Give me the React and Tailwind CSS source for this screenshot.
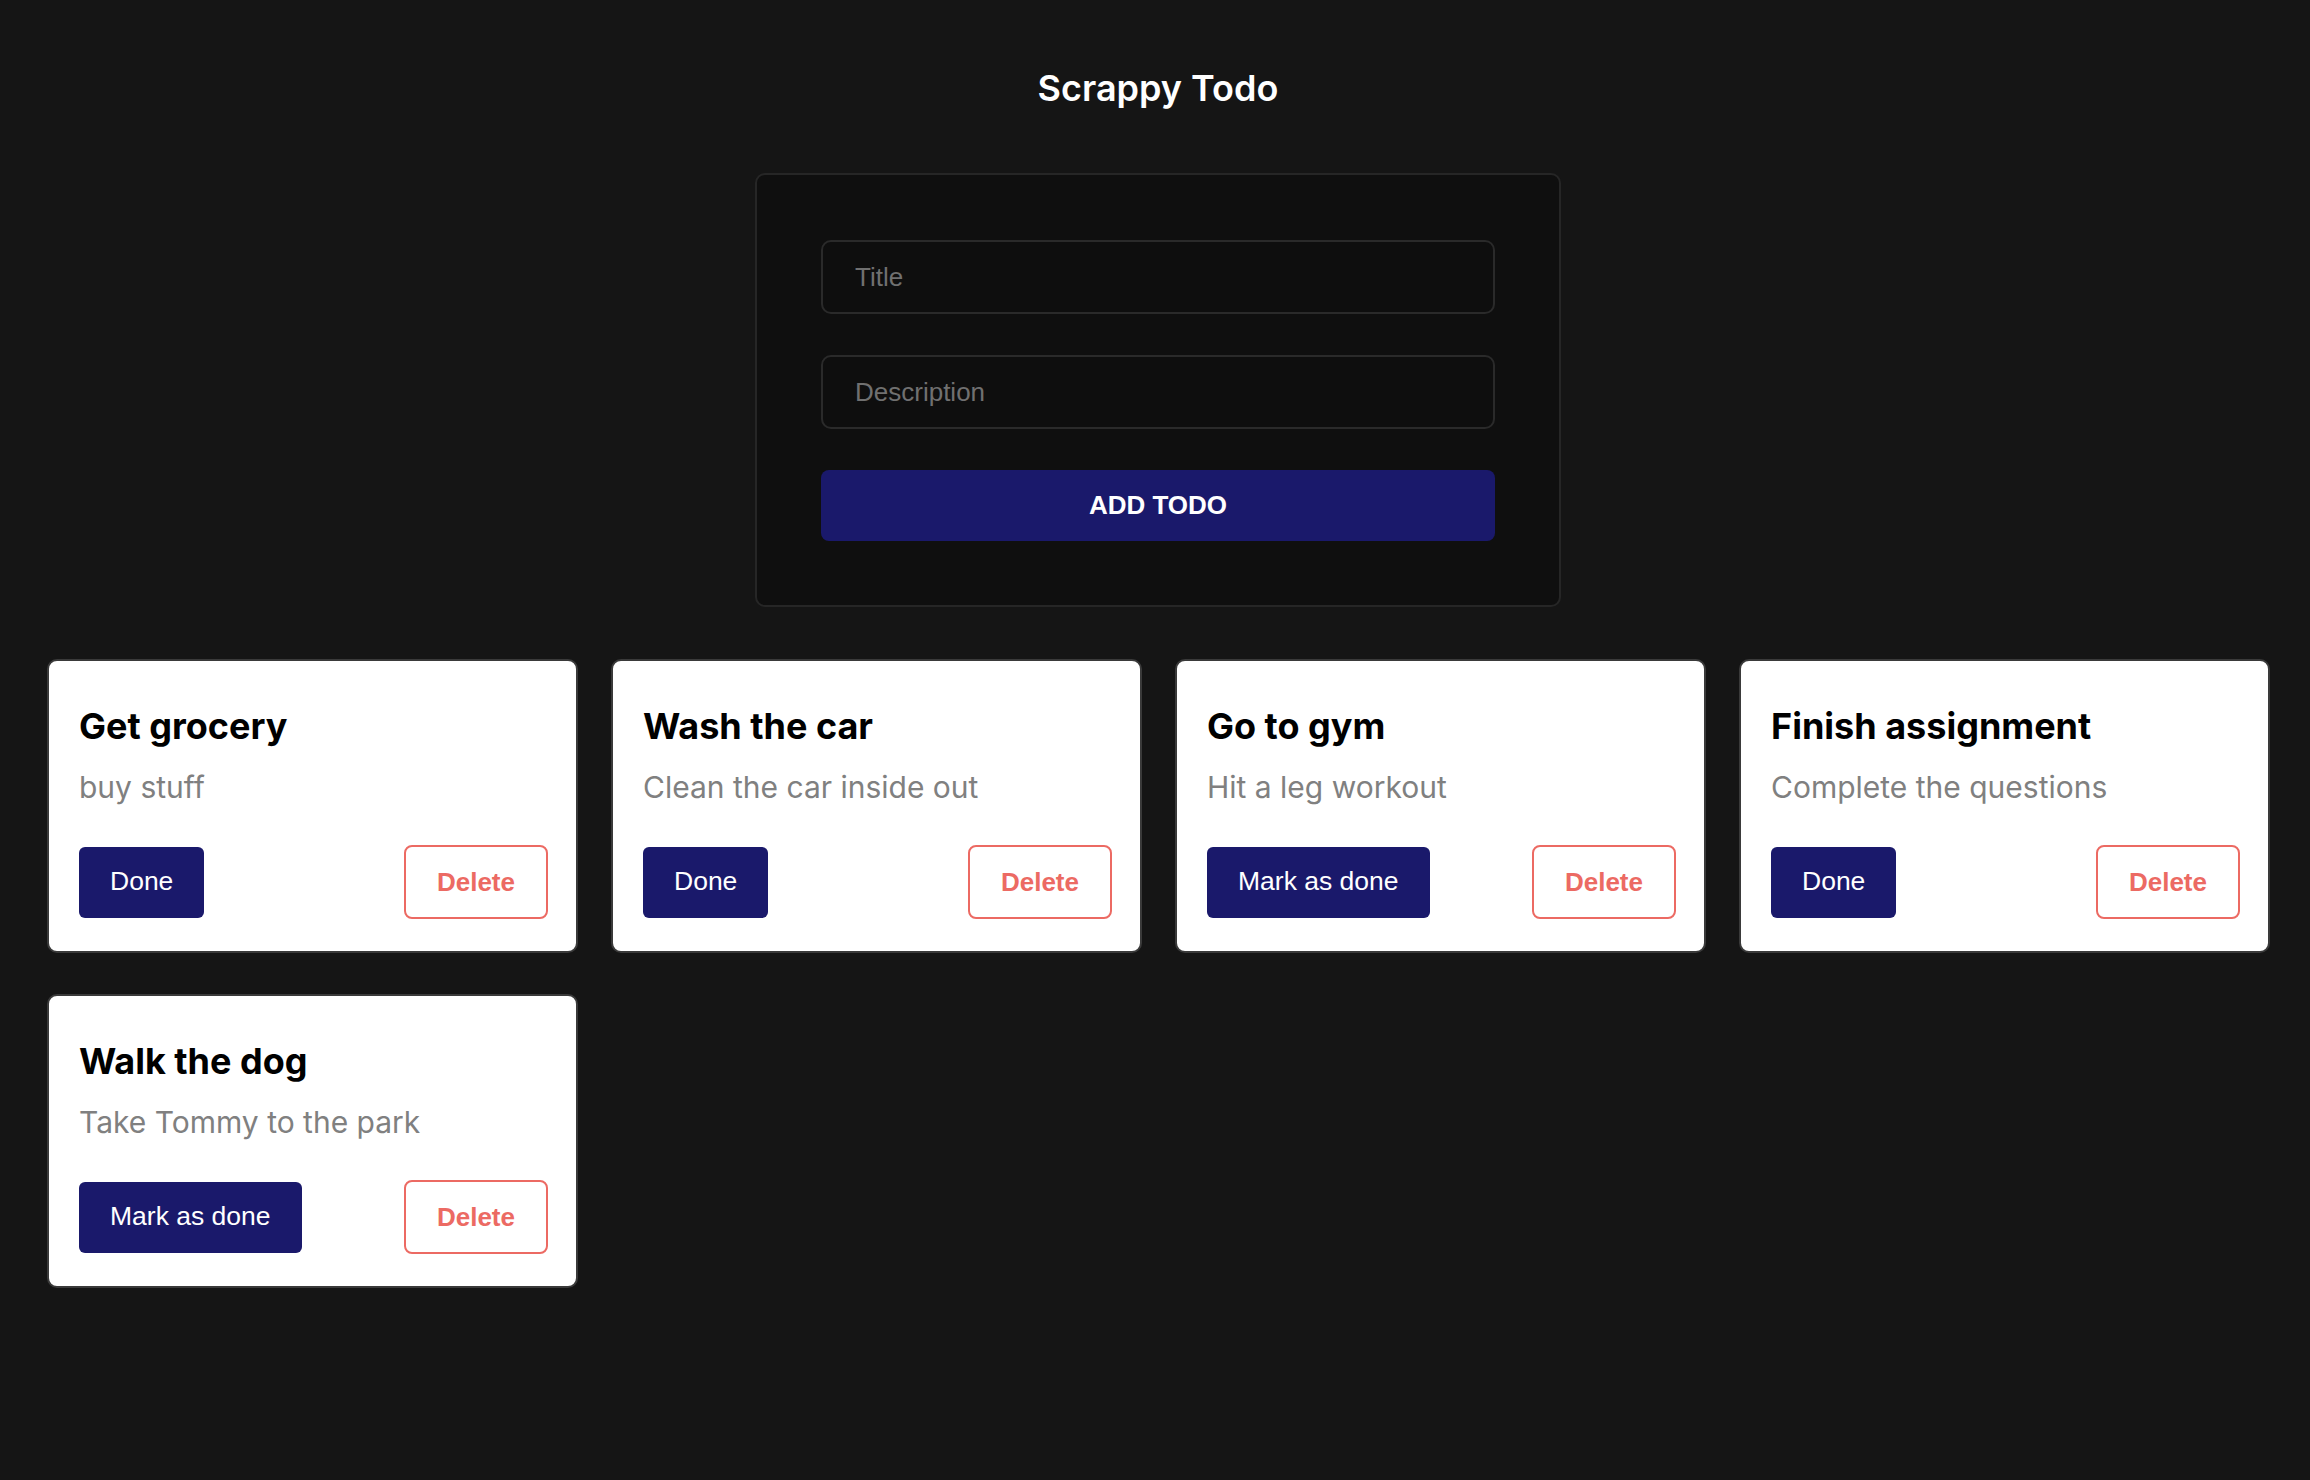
import React from 'react';

const todos = [
    { id: 1, title: 'Get grocery', description: 'buy stuff', completed: true },
    { id: 2, title: 'Wash the car', description: 'Clean the car inside out', completed: true },
    { id: 3, title: 'Go to gym', description: 'Hit a leg workout', completed: false },
    { id: 4, title: 'Finish assignment', description: 'Complete the questions', completed: true },
    { id: 5, title: 'Walk the dog', description: 'Take Tommy to the park', completed: false },
];

const TodoCard = ({ todo }) => (
    <div className="bg-white border-2 border-[#3a3a3a] rounded-[10px] pl-[30px] pr-[28px] pt-[43px] pb-[32px] font-['Inter',sans-serif]">
        <h2 className="text-[36px] leading-[44px] font-bold text-black">{todo.title}</h2>
        <p className="mt-[21px] text-[30px] leading-[36px] text-[#808080]">{todo.description}</p>
        <div className="mt-[40px] flex items-center justify-between font-['Liberation_Sans',Arial,sans-serif]">
            <button className="h-[71px] px-[31px] rounded-[6px] bg-[#1a196b] text-white text-[26.5px]">
                {todo.completed ? 'Done' : 'Mark as done'}
            </button>
            <button className="h-[74px] px-[31px] rounded-[8px] border-2 border-[#ec6a63] bg-white text-[#ec6a63] text-[26px] font-bold">
                Delete
            </button>
        </div>
    </div>
);

export default function App() {
    return (
        <div className="min-h-[1480px] w-full bg-[#151515] pt-[65px] pl-[6px]">
            <h1 className="text-center text-[36px] leading-[46px] font-semibold text-white font-['Inter',sans-serif]">Scrappy Todo</h1>

            <div className="mx-auto mt-[62px] w-[806px] rounded-[10px] border-2 border-[#262626] bg-[#0f0f0f] px-[64px] pt-[65px] pb-[64px] font-['Liberation_Sans',Arial,sans-serif]">
                <input
                    placeholder="Title"
                    className="block w-full h-[74px] rounded-[10px] border-2 border-[#2a2a2a] bg-[#0e0e0e] px-[32px] text-[26px] text-white placeholder:text-[#707070] outline-none"
                />
                <input
                    placeholder="Description"
                    className="mt-[41px] block w-full h-[74px] rounded-[10px] border-2 border-[#2a2a2a] bg-[#0e0e0e] px-[32px] text-[26px] text-white placeholder:text-[#707070] outline-none"
                />
                <button className="mt-[41px] block w-full h-[71px] rounded-[8px] bg-[#1a196b] text-white text-[26px] font-bold">
                    ADD TODO
                </button>
            </div>

            <div className="mt-[52px] grid grid-cols-[repeat(4,531px)] gap-x-[33px] gap-y-[41px] pl-[41px]">
                {todos.map((todo) => (
                    <TodoCard key={todo.id} todo={todo} />
                ))}
            </div>
        </div>
    );
}
